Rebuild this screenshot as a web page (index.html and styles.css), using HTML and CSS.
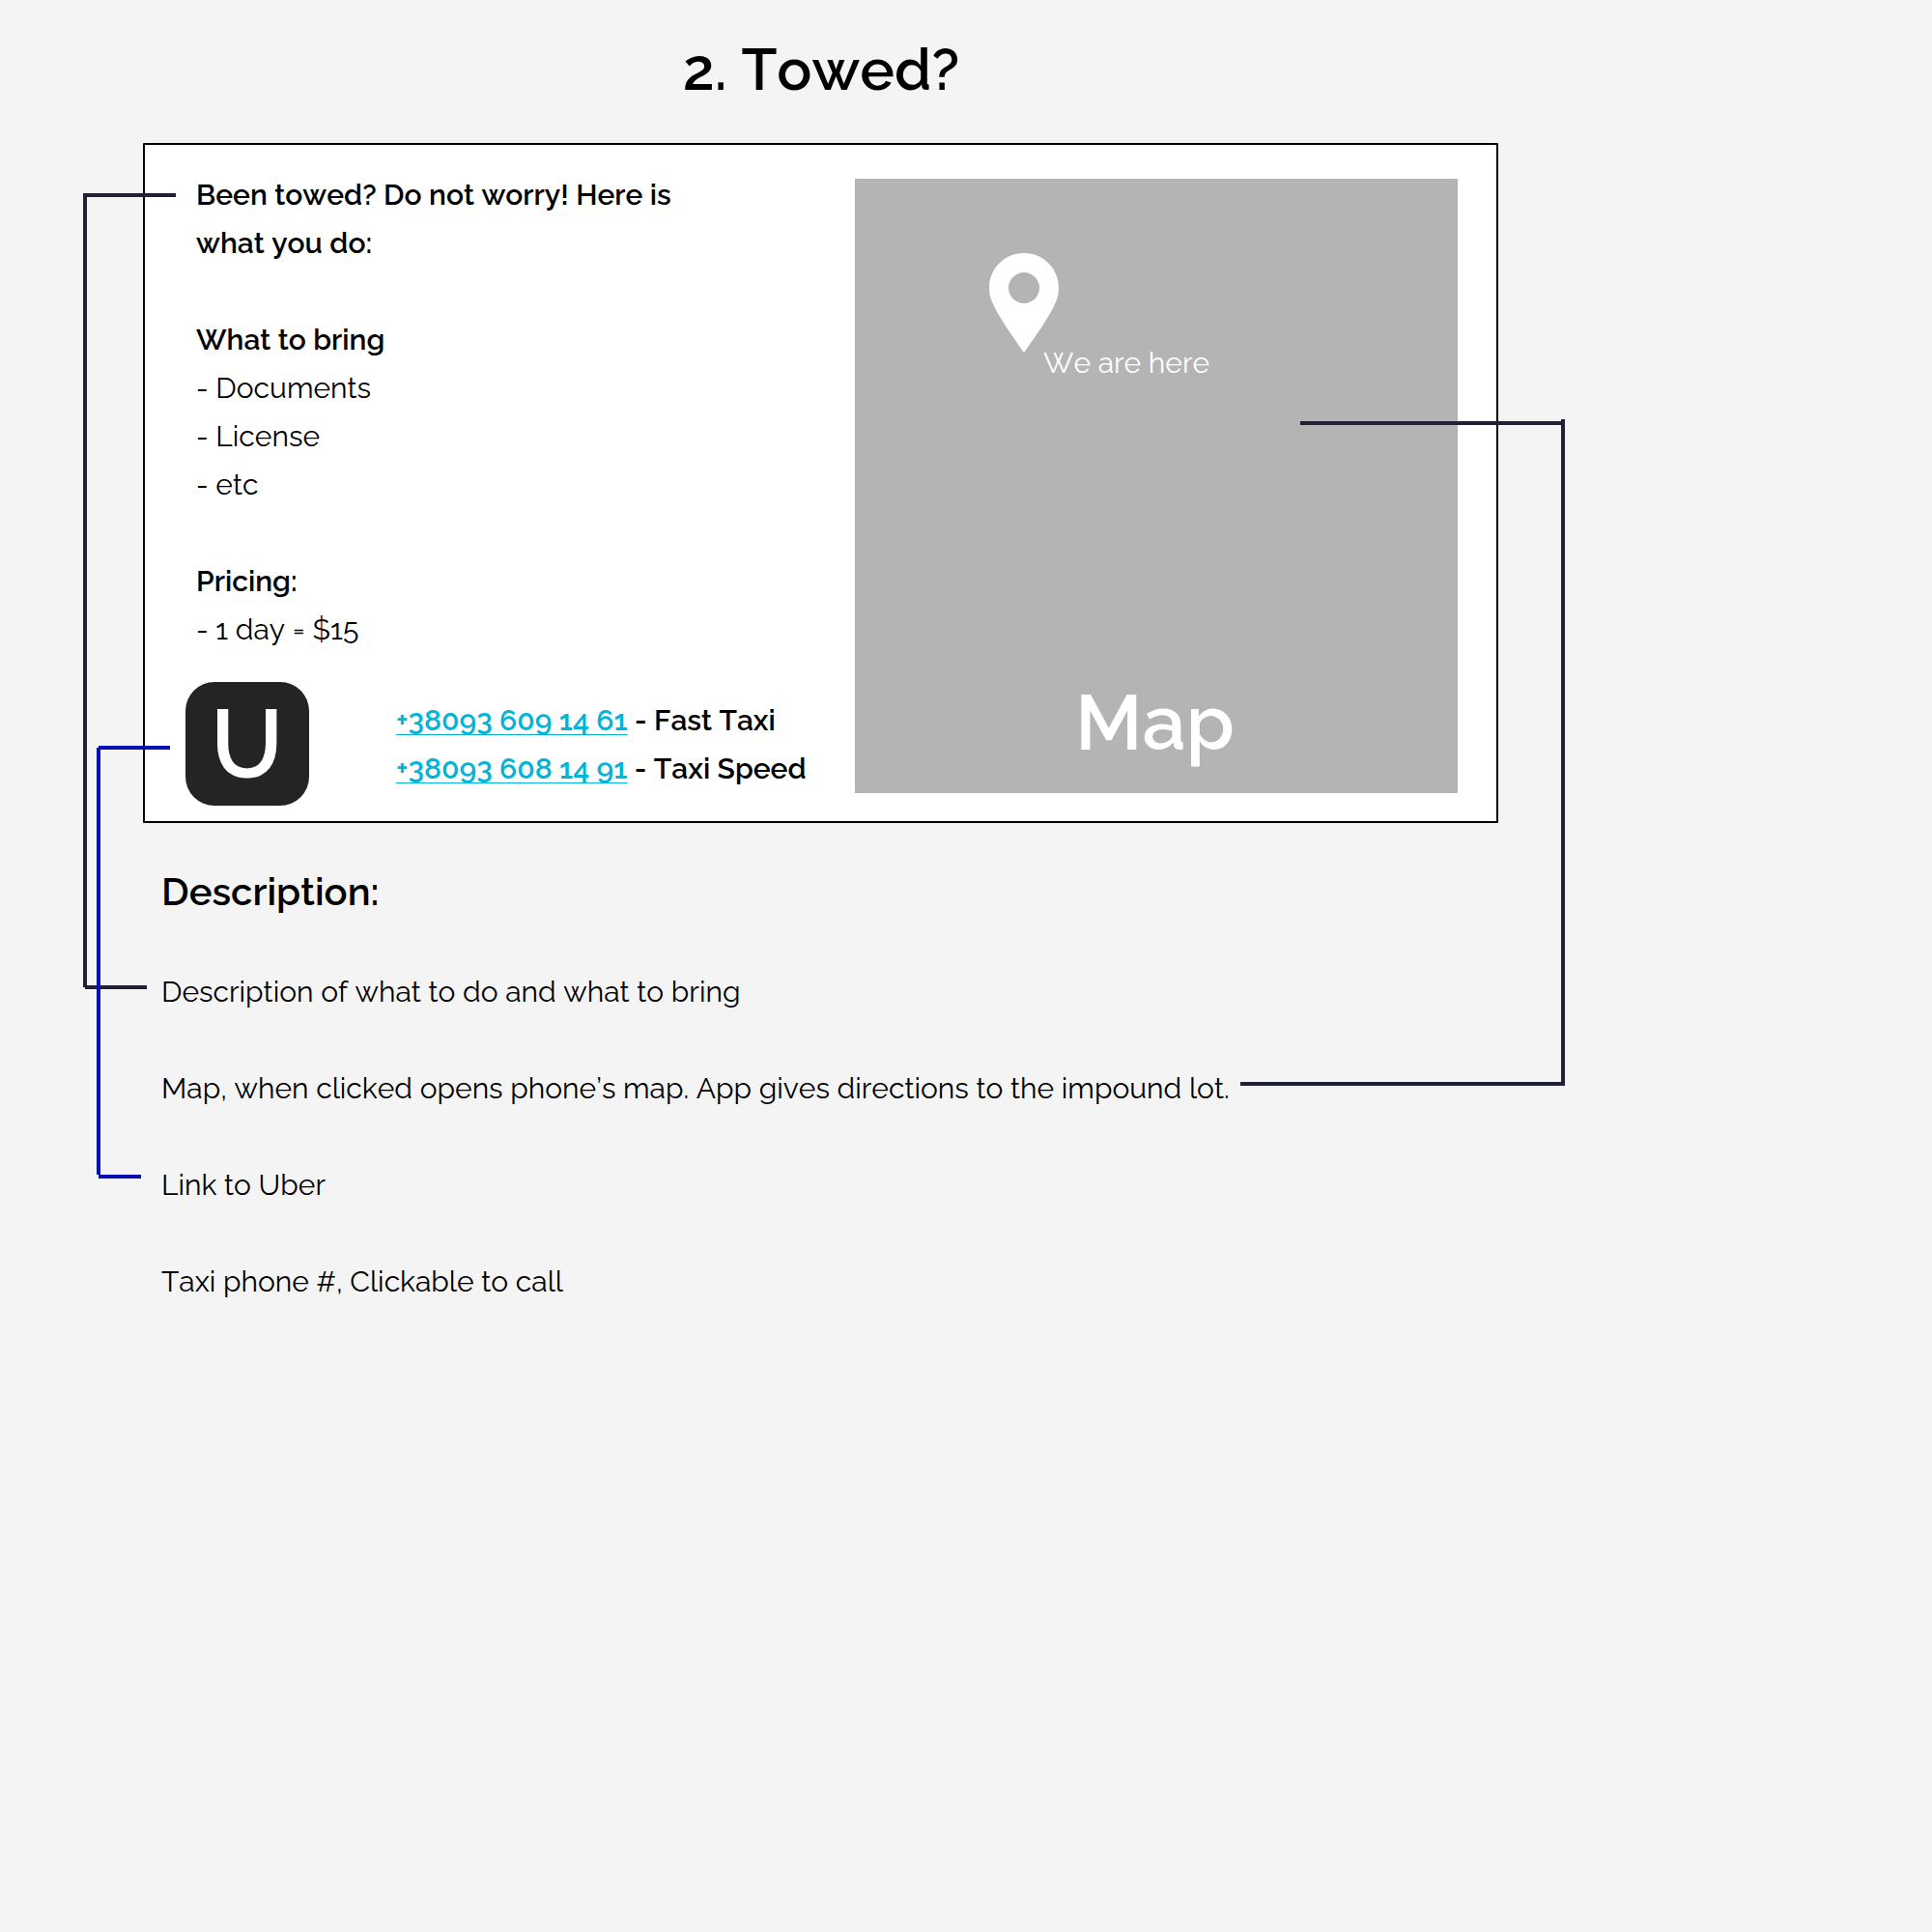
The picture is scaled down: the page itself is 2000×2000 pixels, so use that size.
FILE: index.html
```
<!DOCTYPE html>
<html lang="en">
<head>
<meta charset="utf-8">
<title>2. Towed?</title>
<link rel="stylesheet" href="styles.css">
</head>
<body>
<main class="page">
  <h1 class="title">2. Towed?</h1>
  <section class="card">
    <div class="info">
      <div class="steps">
        <p class="strong">Been towed? Do not worry! Here is<br>what you do:</p>
        <div>
          <p class="strong">What to bring</p>
          <p>- Documents</p>
          <p>- License</p>
          <p>- etc</p>
        </div>
        <div>
          <p class="strong">Pricing:</p>
          <p>- 1 day = $15</p>
        </div>
      </div>
      <div class="rides">
        <div class="uber"><span class="uber-letter">U</span></div>
        <div class="phones strong">
          <p><a class="phone" href="tel:+380936091461">+38093 609 14 61</a> - Fast Taxi</p>
          <p><a class="phone" href="tel:+380936081491">+38093 608 14 91</a> - Taxi Speed</p>
        </div>
      </div>
    </div>
    <div class="map">
      <svg class="pin" width="72" height="103" viewBox="0 0 72 103"><path fill="#fff" fill-rule="evenodd" d="M36 0C16 0 0 16 0 36C0 43 1.500 48 5 55C12 69 24 86 36 103C48 86 60 69 67 55C70.500 48 72 43 72 36C72 16 56 0 36 0ZM36 20a16 16 0 1 1 0 32a16 16 0 1 1 0-32Z"/></svg>
      <span class="here">We are here</span>
      <span class="map-name">Map</span>
    </div>
  </section>
  <section class="description">
    <h2 class="subtitle">Description:</h2>
    <div class="notes">
      <p>Description of what to do and what to bring</p>
      <p>Map, when clicked opens phone’s map. App gives directions to the impound lot.</p>
      <p>Link to Uber</p>
      <p>Taxi phone #, Clickable to call</p>
    </div>
  </section>
  <svg class="connectors" width="2000" height="2000" viewBox="0 0 2000 2000">
    <path fill="#202137" d="M86 200H182V204H90V1022H86ZM88 1020H152V1024H88Z"/>
    <path fill="#202137" d="M1346 436H1616V434H1620V1124H1284V1120H1616V440H1346Z"/>
    <path fill="#0510b4" d="M102 772H176V776H104V1216H100V774H102ZM102 1216H146V1220H102Z"/>
  </svg>
</main>
</body>
</html>
```
FILE: styles.css
```
* {
  box-sizing: border-box;
}

body {
  margin: 0;
  background: #f4f4f4;
  color: #000;
  font: 400 30px/50px Raleway, Lato, sans-serif;
  font-kerning: none;
}

p, h1, h2 {
  margin: 0;
}

.page {
  position: relative;
  width: 2000px;
  height: 2000px;
  padding: 42px 449px 0 148px;
  overflow: hidden;
}

.title {
  font-size: 60px;
  font-weight: 600;
  line-height: 60px;
  text-align: center;
  padding-left: 1px;
  margin-bottom: 46px;
}

.strong {
  font-weight: 600;
}

.card {
  display: flex;
  justify-content: space-between;
  height: 704px;
  padding: 27px 40px 16px 42px;
  border: 2px solid #000;
  border-radius: 1px;
  background: #fff;
}

.info {
  display: flex;
  flex-direction: column;
  justify-content: space-between;
}

.steps {
  display: flex;
  flex-direction: column;
  gap: 50px;
  padding-left: 11px;
}

.rides {
  display: flex;
  align-items: flex-start;
  gap: 90px;
}

.uber {
  display: flex;
  align-items: center;
  justify-content: center;
  width: 128px;
  height: 128px;
  padding-right: 1px;
  border-radius: 30px;
  background: #242424;
}

.uber-letter {
  color: #fff;
  font-size: 100px;
  font-weight: 600;
  line-height: 128px;
}

.phones {
  padding-top: 15px;
}

.phone {
  color: #00b5d9;
  text-decoration: underline 1px;
  text-underline-offset: 4px;
  text-decoration-skip-ink: none;
}

.map {
  position: relative;
  display: flex;
  align-items: flex-end;
  justify-content: center;
  width: 624px;
  height: 636px;
  margin-top: 8px;
  padding: 0 3px 23px 0;
  background: #b4b4b4;
  color: #fff;
}

.pin {
  position: absolute;
  left: 139px;
  top: 77px;
}

.here {
  position: absolute;
  left: 195px;
  top: 166px;
}

.map-name {
  font-size: 80px;
  font-weight: 600;
  line-height: 100px;
}

.description {
  padding: 46px 0 0 19px;
}

.subtitle {
  font-size: 40px;
  font-weight: 600;
  line-height: 50px;
  margin-bottom: 54px;
}

.notes {
  display: flex;
  flex-direction: column;
  gap: 50px;
}

.connectors {
  position: absolute;
  left: 0;
  top: 0;
  pointer-events: none;
}
```
